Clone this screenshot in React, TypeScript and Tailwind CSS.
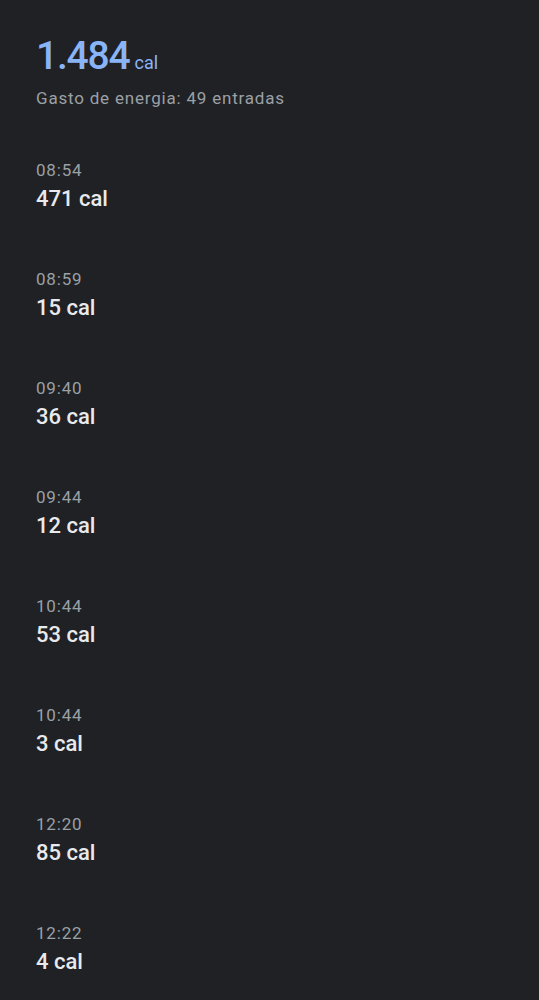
const ENTRIES = [
  { time: '08:54', cal: '471 cal' },
  { time: '08:59', cal: '15 cal' },
  { time: '09:40', cal: '36 cal' },
  { time: '09:44', cal: '12 cal' },
  { time: '10:44', cal: '53 cal' },
  { time: '10:44', cal: '3 cal' },
  { time: '12:20', cal: '85 cal' },
  { time: '12:22', cal: '4 cal' },
];

export default function App() {
  return (
    <div
      className="min-h-[1000px] w-full bg-[#202124] px-9 pt-[34px]"
      style={{ fontFamily: 'Roboto, "Open Sans", sans-serif' }}
    >
      <div className="flex items-baseline gap-[5px]">
        <span className="text-[39px] leading-[44px] font-medium tracking-[-1.2px] text-[#8ab4f8]">1.484</span>
        <span className="text-[18px] text-[#8ab4f8]">cal</span>
      </div>
      <div className="mt-[10px] text-[17px] leading-5 tracking-[0.8px] text-[#9aa0a6]">Gasto de energia: 49 entradas</div>

      <div className="mt-[52px] flex flex-col">
        {ENTRIES.map((e, i) => (
          <div key={i} className="h-[109px]">
            <div className="text-[17px] leading-5 tracking-[0.8px] text-[#9aa0a6]">{e.time}</div>
            <div className="mt-[6px] text-[22px] leading-[26px] font-medium text-[#e8eaed]">{e.cal}</div>
          </div>
        ))}
      </div>
    </div>
  );
}
